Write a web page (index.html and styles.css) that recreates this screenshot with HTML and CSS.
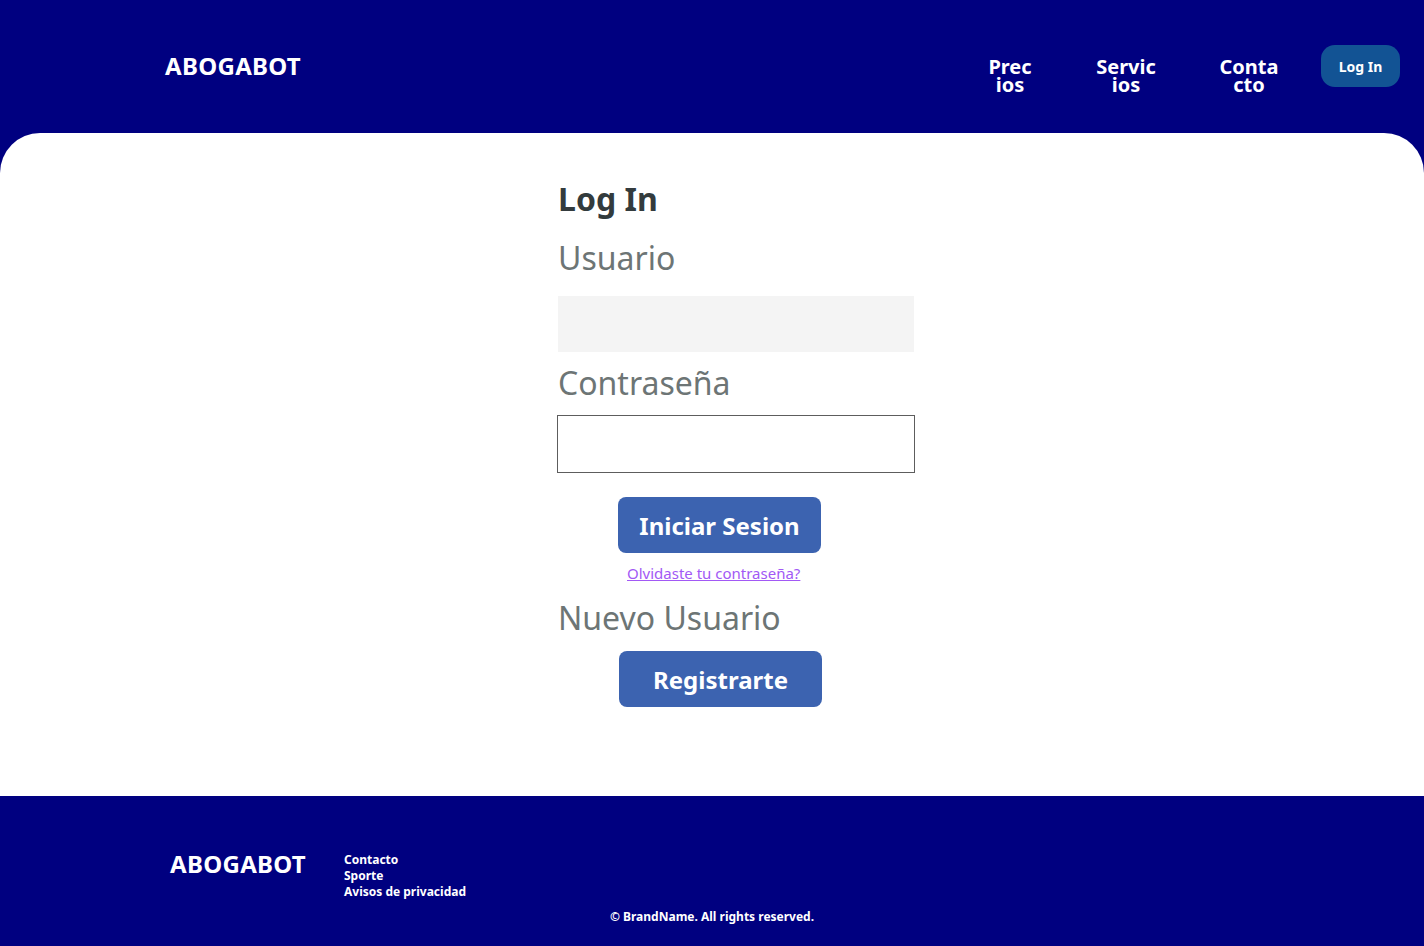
FILE: index.html
```html
<!DOCTYPE html>
<html lang="es">
<head>
<meta charset="utf-8">
<title>ABOGABOT - Log In</title>
<link rel="stylesheet" href="styles.css">
</head>
<body>
<header class="site-header">
  <div class="brand">ABOGABOT</div>
  <nav class="nav">
    <a class="nav-link nav-link--precios" href="#">Precios</a>
    <a class="nav-link nav-link--servicios" href="#">Servicios</a>
    <a class="nav-link nav-link--contacto" href="#">Contacto</a>
  </nav>
  <a class="header-btn" href="#">Log In</a>
</header>
<main class="panel">
  <form class="login">
    <h1 class="login-title">Log In</h1>
    <label class="field-label" for="user">Usuario</label>
    <input class="field field--filled" id="user" type="text">
    <label class="field-label field-label--pass" for="pass">Contraseña</label>
    <input class="field field--outlined" id="pass" type="password">
    <button class="btn btn--login" type="button">Iniciar Sesion</button>
    <a class="forgot" href="#">Olvidaste tu contraseña?</a>
    <div class="field-label field-label--new">Nuevo Usuario</div>
    <button class="btn btn--register" type="button">Registrarte</button>
  </form>
</main>
<footer class="site-footer">
  <div class="footer-top">
    <div class="brand brand--footer">ABOGABOT</div>
    <ul class="footer-links">
      <li><a href="#">Contacto</a></li>
      <li><a href="#">Sporte</a></li>
      <li><a href="#">Avisos de privacidad</a></li>
    </ul>
  </div>
  <p class="copyright">© BrandName. All rights reserved.</p>
</footer>
</body>
</html>
```

FILE: styles.css
```css
* { box-sizing: border-box; }
html, body { margin: 0; padding: 0; }
body {
  background: #000080;
  font-family: "Noto Sans", "Open Sans", sans-serif;
  color: #fff;
  width: 1424px;
  height: 946px;
  overflow: hidden;
}
a { color: inherit; text-decoration: none; }

.site-header {
  height: 133px;
  display: flex;
  align-items: flex-start;
  padding: 45px 24px 0 165px;
}
.brand {
  font-size: 24px;
  font-weight: 700;
  line-height: 42px;
  letter-spacing: 0.3px;
}
.nav {
  margin-left: auto;
  display: flex;
  gap: 62px;
  padding-top: 13px;
}
.nav-link {
  font-size: 20px;
  font-weight: 700;
  line-height: 18px;
  text-align: center;
  word-break: break-all;
}
.nav-link--precios { width: 46px; }
.nav-link--servicios { width: 62px; }
.nav-link--contacto { width: 60px; }
.header-btn {
  margin-left: 42px;
  width: 79px;
  height: 42px;
  border-radius: 14px;
  background: #125394;
  font-size: 14px;
  font-weight: 700;
  display: flex;
  align-items: center;
  justify-content: center;
}

.panel {
  height: 663px;
  background: #fff;
  border-radius: 40px 40px 0 0;
  padding-top: 46px;
}
.login {
  width: 357px;
  margin-left: 557px;
  display: flex;
  flex-direction: column;
  align-items: flex-start;
}
.login-title {
  margin: 0 0 0 1px;
  font-size: 32px;
  font-weight: 700;
  line-height: 40px;
  color: #333b3d;
}
.field-label {
  margin: 19px 0 0 1px;
  font-size: 32px;
  font-weight: 400;
  line-height: 40px;
  color: #6d7575;
}
.field {
  display: block;
  font: inherit;
  outline: none;
}
.field--filled {
  margin: 18px 0 0 1px;
  width: 356px;
  height: 56px;
  border: none;
  background: #f4f4f4;
}
.field-label--pass { margin-top: 11px; }
.field--outlined {
  margin-top: 12px;
  width: 358px;
  height: 58px;
  border: 1px solid #5d5d5d;
  background: #fff;
}
.btn {
  width: 203px;
  height: 56px;
  border: none;
  border-radius: 8px;
  background: #3c63b0;
  color: #fff;
  font-family: inherit;
  font-size: 24px;
  font-weight: 700;
}
.btn--login { margin: 24px 0 0 61px; }
.forgot {
  margin: 10px 0 0 70px;
  font-size: 15px;
  line-height: 20px;
  color: #a259f5;
  text-decoration: underline;
}
.field-label--new { margin-top: 15px; }
.btn--register { margin: 13px 0 0 62px; }

.site-footer {
  height: 150px;
  padding: 50px 0 0 170px;
}
.footer-top {
  display: flex;
  align-items: flex-start;
}
.brand--footer { line-height: 36px; width: 174px; }
.footer-links {
  list-style: none;
  margin: 6px 0 0;
  padding: 0;
  font-size: 12px;
  font-weight: 700;
  line-height: 16px;
}
.copyright {
  margin: 9px 0 0;
  padding-right: 170px;
  text-align: center;
  font-size: 12px;
  font-weight: 700;
  line-height: 16px;
}
```
